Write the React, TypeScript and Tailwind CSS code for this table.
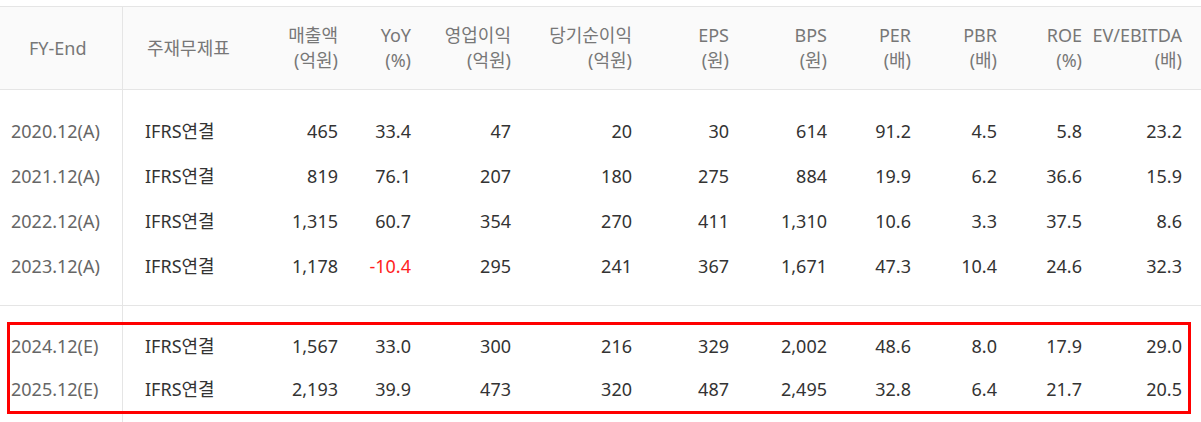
import React from "react";

const cols = "grid grid-cols-[123px_135px_80px_73px_100px_121px_97px_98px_84px_86px_85px_100px_1fr]";

const headers: [string, string][] = [
  ["매출액", "(억원)"],
  ["YoY", "(%)"],
  ["영업이익", "(억원)"],
  ["당기순이익", "(억원)"],
  ["EPS", "(원)"],
  ["BPS", "(원)"],
  ["PER", "(배)"],
  ["PBR", "(배)"],
  ["ROE", "(%)"],
  ["EV/EBITDA", "(배)"],
];

const actual: string[][] = [
  ["2020.12(A)", "465", "33.4", "47", "20", "30", "614", "91.2", "4.5", "5.8", "23.2"],
  ["2021.12(A)", "819", "76.1", "207", "180", "275", "884", "19.9", "6.2", "36.6", "15.9"],
  ["2022.12(A)", "1,315", "60.7", "354", "270", "411", "1,310", "10.6", "3.3", "37.5", "8.6"],
  ["2023.12(A)", "1,178", "-10.4", "295", "241", "367", "1,671", "47.3", "10.4", "24.6", "32.3"],
];

const estimate: string[][] = [
  ["2024.12(E)", "1,567", "33.0", "300", "216", "329", "2,002", "48.6", "8.0", "17.9", "29.0"],
  ["2025.12(E)", "2,193", "39.9", "473", "320", "487", "2,495", "32.8", "6.4", "21.7", "20.5"],
];

function Row({ r, h }: { r: string[]; h: string }) {
  return (
    <div className={`${cols} ${h} items-center`}>
      <div className="h-full flex items-center pl-[11px] text-[#666] border-r border-[#e5e5e5]">{r[0]}</div>
      <div className="pl-[22px] text-[#333]">IFRS연결</div>
      {r.slice(1).map((v, i) => (
        <div key={i} className={`text-right ${v.startsWith("-") ? "text-[#ff1e1e]" : "text-[#333]"}`}>
          {v}
        </div>
      ))}
      <div />
    </div>
  );
}

export default function App() {
  return (
    <div
      className="relative w-[1201px] h-[422px] overflow-hidden bg-white text-[18px] leading-[25px]"
      style={{ fontFamily: '"Noto Sans", "Noto Sans CJK KR", sans-serif' }}
    >
      <div className="pt-[6px]">
        <div className={`${cols} h-[84px] bg-[#fafafa] border-y border-[#e5e5e5] text-[#777]`}>
          <div className="flex items-center pl-[29px] border-r border-[#e5e5e5]">FY-End</div>
          <div className="flex items-center pl-[24px]">주재무제표</div>
          {headers.map(([a, b], i) => (
            <div key={i} className="flex flex-col justify-center items-end pb-[1px]">
              <span>{a}</span>
              <span>{b}</span>
            </div>
          ))}
          <div />
        </div>
        <div className="flex flex-col border-b border-[#e5e5e5]">
          <div className={`${cols} h-[19px]`}>
            <div className="border-r border-[#e5e5e5]" />
          </div>
          {actual.map((r, i) => (
            <Row key={i} r={r} h="h-[45px]" />
          ))}
          <div className={`${cols} h-[16px]`}>
            <div className="border-r border-[#e5e5e5]" />
          </div>
        </div>
        <div className="flex flex-col">
          <div className={`${cols} h-[19px]`}>
            <div className="border-r border-[#e5e5e5]" />
          </div>
          {estimate.map((r, i) => (
            <Row key={i} r={r} h="h-[43px]" />
          ))}
          <div className={`${cols} h-[40px]`}>
            <div className="border-r border-[#e5e5e5]" />
          </div>
        </div>
      </div>
      <div className="absolute left-[7px] top-[322px] w-[1184px] h-[92px] border-[3px] border-[#ff0000] pointer-events-none" />
    </div>
  );
}
